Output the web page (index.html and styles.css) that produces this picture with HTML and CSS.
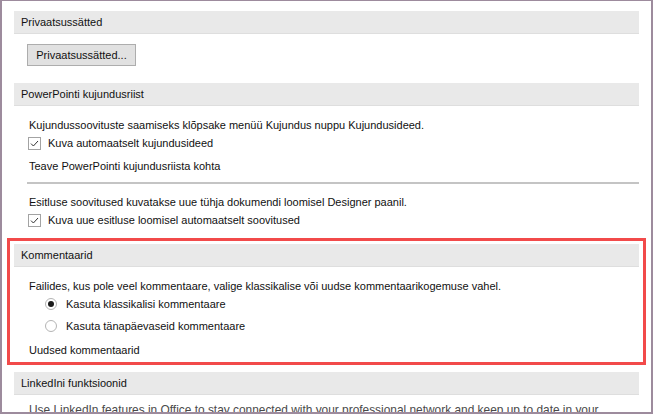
FILE: index.html
```html
<!DOCTYPE html>
<html lang="et">
<head>
<meta charset="utf-8">
<title>Valikud</title>
<link rel="stylesheet" href="styles.css">
</head>
<body>
<div class="window">
  <div class="content">
    <div class="sec-head">Privaatsussätted</div>
    <div class="btn-row"><button class="btn">Privaatsussätted...</button></div>

    <div class="sec-head mt17">PowerPointi kujundusriist</div>
    <div class="body">
      <div class="line mt10">Kujundussoovituste saamiseks klõpsake menüü Kujundus nuppu Kujundusideed.</div>
      <div class="line check-row"><span class="cb"><svg width="11" height="11" viewBox="0 0 11 11"><path d="M2 5.6 L4.4 8 L9 3" fill="none" stroke="#333" stroke-width="1"/></svg></span>Kuva automaatselt kujundusideed</div>
      <div class="line mt5">Teave PowerPointi kujundusriista kohta</div>
      <div class="sep"></div>
      <div class="line mt9">Esitluse soovitused kuvatakse uue tühja dokumendi loomisel Designer paanil.</div>
      <div class="line check-row"><span class="cb"><svg width="11" height="11" viewBox="0 0 11 11"><path d="M2 5.6 L4.4 8 L9 3" fill="none" stroke="#333" stroke-width="1"/></svg></span>Kuva uue esitluse loomisel automaatselt soovitused</div>
    </div>

    <div class="highlight">
      <div class="sec-head">Kommentaarid</div>
      <div class="body">
        <div class="line mt10">Failides, kus pole veel kommentaare, valige klassikalise või uudse kommentaarikogemuse vahel.</div>
        <div class="line radio-row"><span class="rb checked"></span>Kasuta klassikalisi kommentaare</div>
        <div class="line radio-row mt4"><span class="rb"></span>Kasuta tänapäevaseid kommentaare</div>
        <div class="line mt6">Uudsed kommentaarid</div>
      </div>
    </div>

    <div class="sec-head mt7">LinkedIni funktsioonid</div>
    <div class="body">
      <div class="line mt5 muted">Use LinkedIn features in Office to stay connected with your professional network and keep up to date in your</div>
    </div>
  </div>
</div>
</body>
</html>
```

FILE: styles.css
```css
html, body {
  margin: 0;
  padding: 0;
  background: #ffffff;
}

.window {
  width: 653px;
  height: 414px;
  box-sizing: border-box;
  border-top: 1px solid #9d8b9d;
  border-left: 2px solid #9d8b9d;
  border-right: 2px solid #9d8b9d;
  border-bottom: 2px solid #9d8b9d;
  overflow: hidden;
  background: #ffffff;
  font-family: "Liberation Sans", Arial, sans-serif;
  font-size: 11px;
  color: #111111;
}

.content {
  padding: 10px 12px 0 12px;
}

.sec-head {
  height: 22px;
  line-height: 22px;
  padding-left: 7px;
  background: #e9e9e9;
  border-bottom: 1px solid #dedede;
  color: #111111;
}

.btn-row {
  margin-top: 10px;
  padding-left: 13px;
  display: flex;
}

.btn {
  width: 109px;
  height: 22px;
  box-sizing: border-box;
  border: 1px solid #adadad;
  background: #e1e1e1;
  font-family: inherit;
  font-size: 11px;
  color: #111111;
  padding: 0;
  margin: 0;
}

.body {
  padding-left: 15px;
}

.line {
  height: 18px;
  line-height: 18px;
  white-space: nowrap;
}

.check-row {
  display: flex;
  align-items: center;
  margin-left: -1px;
}

.cb {
  width: 13px;
  height: 13px;
  box-sizing: border-box;
  border: 1px solid #a3a3a3;
  background: #ffffff;
  margin-right: 7px;
  display: flex;
  align-items: center;
  justify-content: center;
}

.cb svg {
  display: block;
}

.sep {
  height: 2px;
  background: #c4c4c4;
  margin-top: 7px;
  margin-left: -2px;
}

.highlight {
  margin: 9px -7px 0 -7px;
  border: 3px solid #f24a4a;
  padding: 3px 4px 3px 4px;
}

.radio-row {
  display: flex;
  align-items: center;
  padding-left: 16px;
}

.rb {
  width: 12px;
  height: 12px;
  box-sizing: border-box;
  border: 1px solid #b4b4b4;
  border-radius: 50%;
  background: #ffffff;
  margin-right: 9px;
  display: flex;
  align-items: center;
  justify-content: center;
}

.rb.checked::after {
  content: "";
  width: 6px;
  height: 6px;
  border-radius: 50%;
  background: #1a1a1a;
}

.muted {
  color: #4a4a4a;
  font-size: 11.9px;
  line-height: 20px;
  height: 20px;
}

.mt4 { margin-top: 4px; }
.mt5 { margin-top: 5px; }
.mt6 { margin-top: 6px; }
.mt7 { margin-top: 7px; }
.mt9 { margin-top: 9px; }
.mt10 { margin-top: 10px; }
.mt17 { margin-top: 17px; }
```
